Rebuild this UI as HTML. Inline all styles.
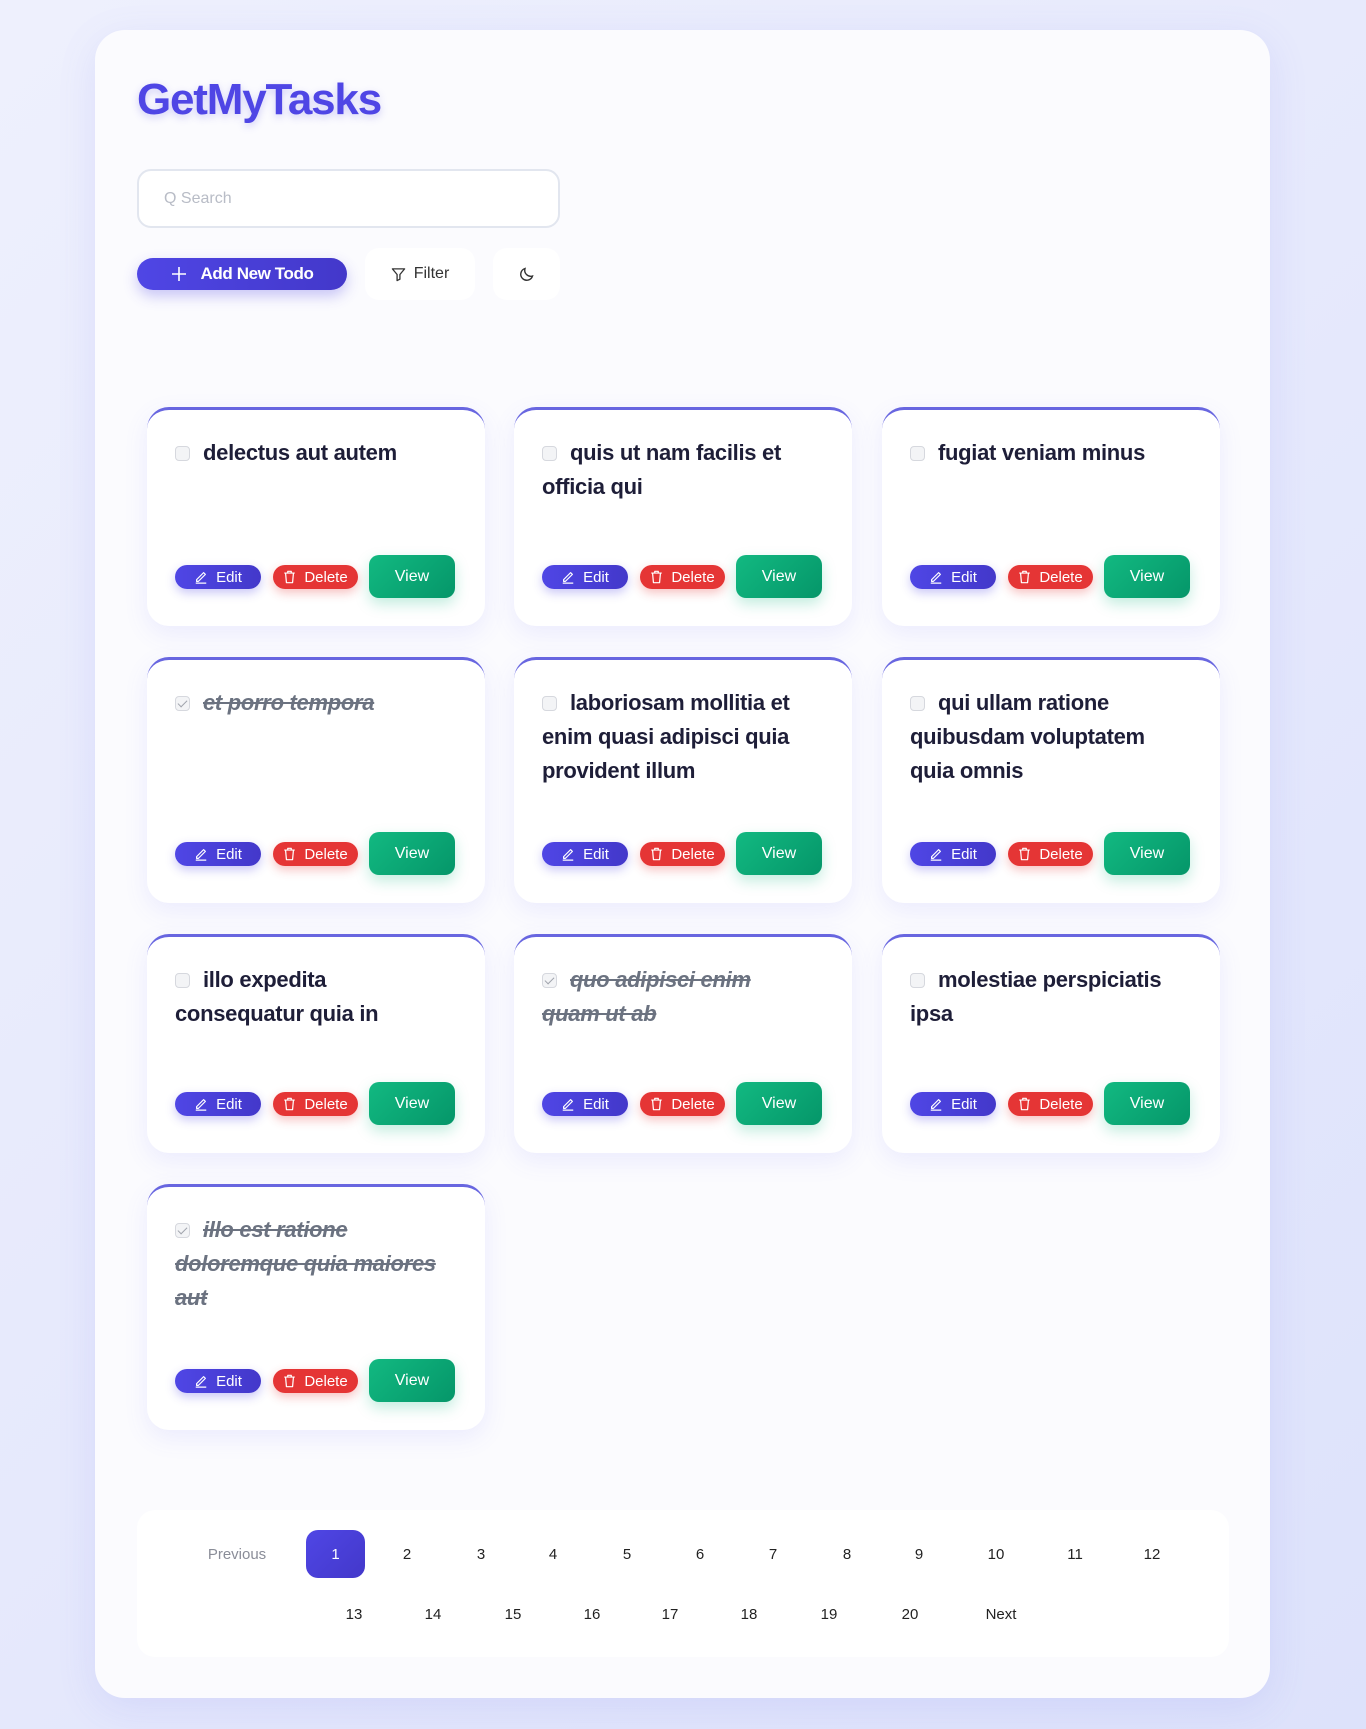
<!DOCTYPE html>
<html><head><meta charset="utf-8"><style>
*{box-sizing:border-box;margin:0;padding:0}
body{width:1366px;height:1729px;background:linear-gradient(135deg,#eef0fd 0%,#e6e9fc 50%,#dde2fb 100%);font-family:"Liberation Sans",sans-serif;position:relative;overflow:hidden}
.wrap{position:absolute;left:95px;top:30px;width:1175px;height:1668px;background:#fbfbfe;border-radius:30px;box-shadow:0 10px 40px rgba(99,102,241,.12)}
.title{position:absolute;left:137px;top:75px;font-size:44px;font-weight:bold;color:#4f46e5;letter-spacing:-1.2px;text-shadow:0 3px 8px rgba(79,70,229,.25)}
.search{position:absolute;left:137px;top:169px;width:423px;height:59px;border:2px solid #e2e6ef;border-radius:14px;background:#fff;font-size:16px;color:#b8bcc6;padding:19px 25px}
.add{position:absolute;left:137px;top:258px;width:210px;height:32px;border-radius:16px;background:linear-gradient(90deg,#4f46e5,#4338ca);color:#fff;font-weight:bold;font-size:17px;letter-spacing:-.4px;display:flex;align-items:center;justify-content:center;gap:14px;box-shadow:0 6px 14px rgba(79,70,229,.3)}
.filter{position:absolute;left:365px;top:248px;width:110px;height:52px;background:#fff;border-radius:14px;display:flex;align-items:center;justify-content:center;gap:8px;font-size:16px;color:#333}
.moon{position:absolute;left:493px;top:248px;width:67px;height:52px;background:#fff;border-radius:14px;display:flex;align-items:center;justify-content:center}
.card{position:absolute;width:338px;background:#fff;border-radius:22px;border-top:3px solid #6866e0;box-shadow:0 8px 24px rgba(99,102,241,.10)}
.t{position:absolute;left:28px;top:26px;right:45px;font-size:22px;font-weight:bold;line-height:34px;color:#1e1e38;letter-spacing:-.3px}
.t.done{color:#6b7280;font-style:italic;text-decoration:line-through}
.cb{display:inline-block;width:15px;height:15px;border:1px solid #d6d8de;border-radius:4px;background:#f3f4f6;margin-right:13px;vertical-align:-1px;position:relative}
.cb.c::after{content:"";position:absolute;left:4px;top:1px;width:4px;height:8px;border:solid #a0a4ac;border-width:0 1.5px 1.5px 0;transform:rotate(45deg)}
.btns{position:absolute;left:28px;bottom:28px;height:43px;width:290px}
.edit,.del{position:absolute;top:10px;height:24px;border-radius:12px;color:#fff;font-size:15px;display:flex;align-items:center;justify-content:center;gap:8px}
.edit{left:0;width:86px;background:linear-gradient(90deg,#4f46e5,#4338ca);box-shadow:0 4px 10px rgba(79,70,229,.3)}
.del{left:98px;width:85px;background:#e53535;box-shadow:0 4px 10px rgba(229,53,53,.3)}
.view{position:absolute;left:194px;top:0;width:86px;height:43px;border-radius:10px;background:linear-gradient(135deg,#12b981,#059669);color:#fff;font-size:16px;display:flex;align-items:center;justify-content:center;box-shadow:0 6px 14px rgba(16,185,129,.25)}
.pag{position:absolute;left:137px;top:1510px;width:1092px;height:147px;background:#fff;border-radius:18px}
.p{position:absolute;font-size:15px;color:#222;transform:translateX(-50%)}
.act{position:absolute;left:306px;top:1530px;width:59px;height:48px;border-radius:12px;background:linear-gradient(135deg,#4f46e5,#4338ca);color:#fff;font-size:15px;display:flex;align-items:center;justify-content:center}
</style></head><body>
<div class="wrap"></div>
<div class="title">GetMyTasks</div>
<div class="search">Q Search</div>
<div class="add"><svg width="16" height="16" viewBox="0 0 16 16"><path d="M8 1v14M1 8h14" stroke="#fff" stroke-width="1.6"/></svg>Add New Todo</div>
<div class="filter"><svg width="15" height="15" viewBox="0 0 16 16" fill="none" stroke="#333" stroke-width="1.4" stroke-linejoin="round"><path d="M1.5 2h13l-5 6v5l-3 1.5V8z"/></svg>Filter</div>
<div class="moon"><svg width="16" height="16" viewBox="0 0 16 16" fill="none" stroke="#333" stroke-width="1.4"><path d="M13.5 10A6 6 0 0 1 6 2.5 6 6 0 1 0 13.5 10z"/></svg></div>

<div class="card" style="left:147px;top:407px;height:219px"><div class="t"><span class="cb"></span>delectus aut autem</div>BTN</div>
<div class="card" style="left:514px;top:407px;height:219px"><div class="t"><span class="cb"></span>quis ut nam facilis et officia qui</div>BTN</div>
<div class="card" style="left:882px;top:407px;height:219px"><div class="t"><span class="cb"></span>fugiat veniam minus</div>BTN</div>
<div class="card" style="left:147px;top:657px;height:246px"><div class="t done"><span class="cb c"></span>et porro tempora</div>BTN</div>
<div class="card" style="left:514px;top:657px;height:246px"><div class="t"><span class="cb"></span>laboriosam mollitia et enim quasi adipisci quia provident illum</div>BTN</div>
<div class="card" style="left:882px;top:657px;height:246px"><div class="t"><span class="cb"></span>qui ullam ratione quibusdam voluptatem quia omnis</div>BTN</div>
<div class="card" style="left:147px;top:934px;height:219px"><div class="t"><span class="cb"></span>illo expedita consequatur quia in</div>BTN</div>
<div class="card" style="left:514px;top:934px;height:219px"><div class="t done"><span class="cb c"></span>quo adipisci enim quam ut ab</div>BTN</div>
<div class="card" style="left:882px;top:934px;height:219px"><div class="t"><span class="cb"></span>molestiae perspiciatis ipsa</div>BTN</div>
<div class="card" style="left:147px;top:1184px;height:246px"><div class="t done"><span class="cb c"></span>illo est ratione doloremque quia maiores aut</div>BTN</div>

<div class="pag"></div>
<div class="act">1</div>
<div class="p" style="left:237px;top:1546px;color:#8a8d98">Previous</div>
<div class="p" style="left:407px;top:1546px">2</div>
<div class="p" style="left:481px;top:1546px">3</div>
<div class="p" style="left:553px;top:1546px">4</div>
<div class="p" style="left:627px;top:1546px">5</div>
<div class="p" style="left:700px;top:1546px">6</div>
<div class="p" style="left:773px;top:1546px">7</div>
<div class="p" style="left:847px;top:1546px">8</div>
<div class="p" style="left:919px;top:1546px">9</div>
<div class="p" style="left:996px;top:1546px">10</div>
<div class="p" style="left:1075px;top:1546px">11</div>
<div class="p" style="left:1152px;top:1546px">12</div>
<div class="p" style="left:354px;top:1606px">13</div>
<div class="p" style="left:433px;top:1606px">14</div>
<div class="p" style="left:513px;top:1606px">15</div>
<div class="p" style="left:592px;top:1606px">16</div>
<div class="p" style="left:670px;top:1606px">17</div>
<div class="p" style="left:749px;top:1606px">18</div>
<div class="p" style="left:829px;top:1606px">19</div>
<div class="p" style="left:910px;top:1606px">20</div>
<div class="p" style="left:1001px;top:1606px">Next</div>
<script>
var b='<div class="btns"><div class="edit"><svg width="14" height="14" viewBox="0 0 16 16" fill="none" stroke="#fff" stroke-width="1.4" stroke-linejoin="round"><path d="M3 11l8-8 2 2-8 8H3z"/><path d="M2 15h12"/></svg>Edit</div><div class="del"><svg width="13" height="14" viewBox="0 0 14 16" fill="none" stroke="#fff" stroke-width="1.4" stroke-linejoin="round"><path d="M1 3.5h12M5 3.5V1.5h4v2M2.5 3.5l1 11h7l1-11"/></svg>Delete</div><div class="view">View</div></div>';
document.querySelectorAll('.card').forEach(function(c){c.innerHTML=c.innerHTML.replace('BTN',b);});
</script>
</body></html>
